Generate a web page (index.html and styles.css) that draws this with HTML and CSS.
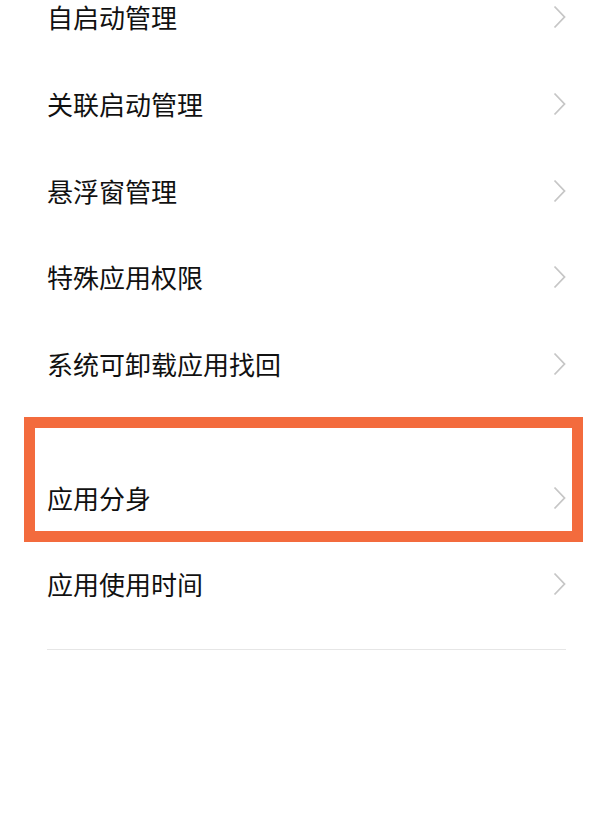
FILE: index.html
```html
<!DOCTYPE html>
<html lang="zh-CN">
<head>
    <meta charset="UTF-8">
    <meta name="viewport" content="width=device-width, initial-scale=1.0">
    <title>应用管理</title>
    <link rel="stylesheet" href="styles.css">
</head>
<body>

<div class="screen">
    <ul class="menu">
        <li class="menu-item"><span>自启动管理</span><svg class="chevron" viewBox="0 0 13 24"><polyline points="1.5,1.5 11.5,12 1.5,22.5"/></svg></li>
        <li class="menu-item"><span>关联启动管理</span><svg class="chevron" viewBox="0 0 13 24"><polyline points="1.5,1.5 11.5,12 1.5,22.5"/></svg></li>
        <li class="menu-item"><span>悬浮窗管理</span><svg class="chevron" viewBox="0 0 13 24"><polyline points="1.5,1.5 11.5,12 1.5,22.5"/></svg></li>
        <li class="menu-item"><span>特殊应用权限</span><svg class="chevron" viewBox="0 0 13 24"><polyline points="1.5,1.5 11.5,12 1.5,22.5"/></svg></li>
        <li class="menu-item"><span>系统可卸载应用找回</span><svg class="chevron" viewBox="0 0 13 24"><polyline points="1.5,1.5 11.5,12 1.5,22.5"/></svg></li>
        <li class="menu-item group-start"><span>应用分身</span><svg class="chevron" viewBox="0 0 13 24"><polyline points="1.5,1.5 11.5,12 1.5,22.5"/></svg></li>
        <li class="menu-item"><span>应用使用时间</span><svg class="chevron" viewBox="0 0 13 24"><polyline points="1.5,1.5 11.5,12 1.5,22.5"/></svg></li>
    </ul>
    <div class="divider"></div>

    <!-- annotation box drawn over the screenshot -->
    <div class="highlight"></div>
</div>

</body>
</html>
```

FILE: styles.css
```css
body {
    margin: 0;
    padding: 0;
    background-color: #ffffff;
    font-family: "Noto Sans CJK SC", "Noto Sans", sans-serif;
    color: #111;
}
.screen {
    position: relative;
    width: 596px;
    height: 830px;
    overflow: hidden;
}
.menu {
    list-style: none;
    margin: -26px 0 0 0;
    padding: 0;
}
.menu-item {
    display: flex;
    align-items: center;
    justify-content: space-between;
    height: 86.7px;
    padding: 0 30px 0 47px;
    font-size: 26px;
}
.menu-item span {
    line-height: 1;
}
.group-start {
    margin-top: 47px;
}
.chevron {
    width: 13px;
    height: 24px;
    fill: none;
    stroke: #c6c6c6;
    stroke-width: 1.8;
}
.divider {
    height: 1px;
    margin: 21px 30px 0 47px;
    background-color: #e6e6e6;
}
.highlight {
    position: absolute;
    left: 24px;
    top: 417px;
    width: 559px;
    height: 125px;
    box-sizing: border-box;
    border: 11px solid #f36b3d;
}
```
